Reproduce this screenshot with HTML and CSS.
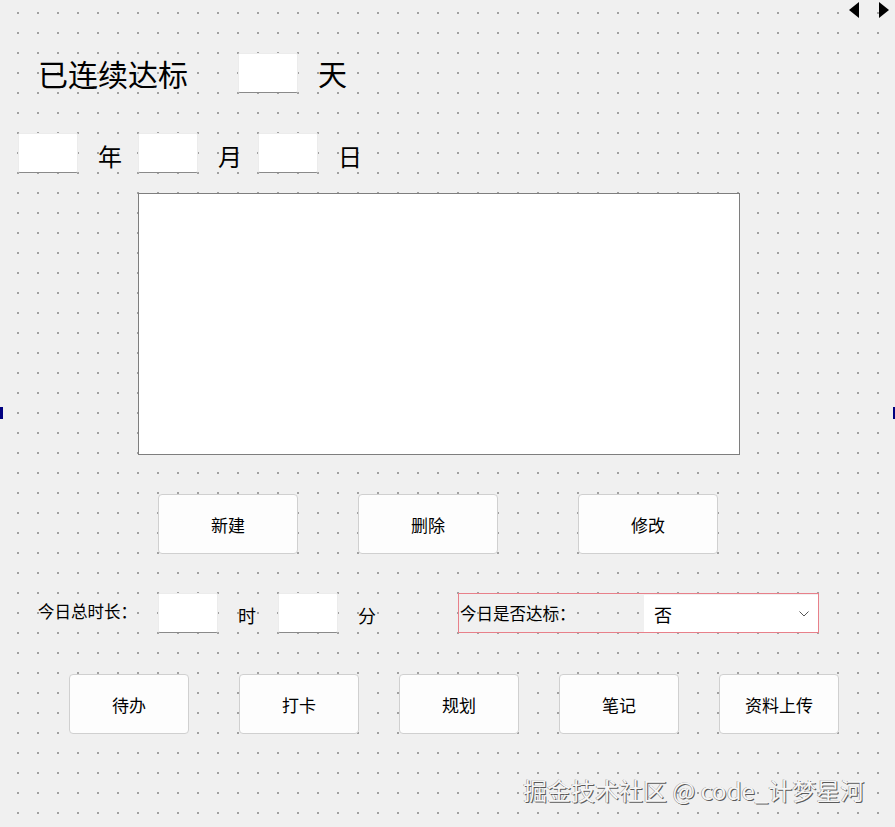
FILE: index.html
```html
<!DOCTYPE html>
<html>
<head>
  <title>打卡</title>
  <link rel="stylesheet" href="styles.css">
</head>
<body>
  <div class="form">
    <div class="nav-arrows">
      <svg width="10" height="16" viewBox="0 0 10 16"><polygon points="10,0 0,8 10,16" fill="#000"/></svg>
      <svg width="10" height="16" viewBox="0 0 10 16"><polygon points="0,0 10,8 0,16" fill="#000"/></svg>
    </div>

    <div class="row streak">
      <span class="streak-label">已连续达标</span>
      <input class="field" type="text">
      <span class="streak-unit">天</span>
    </div>

    <div class="row date">
      <input class="field" type="text">
      <span class="date-unit">年</span>
      <input class="field" type="text">
      <span class="date-unit">月</span>
      <input class="field" type="text">
      <span class="date-unit">日</span>
    </div>

    <textarea class="notes"></textarea>

    <div class="row actions">
      <button class="btn btn-wide">新建</button>
      <button class="btn btn-wide gap-60">删除</button>
      <button class="btn btn-wide gap-80">修改</button>
    </div>

    <div class="row today">
      <span class="today-label">今日总时长：</span>
      <input class="field" type="text">
      <span class="time-unit">时</span>
      <input class="field" type="text">
      <span class="time-unit">分</span>
      <div class="reached">
        <span class="reached-label">今日是否达标：</span>
        <div class="combo">
          <span>否</span>
          <svg width="10" height="6" viewBox="0 0 10 6"><polyline points="0.5,0.5 5,5 9.5,0.5" fill="none" stroke="#555" stroke-width="1"/></svg>
        </div>
      </div>
    </div>

    <div class="row nav">
      <button class="btn">待办</button>
      <button class="btn gap-50">打卡</button>
      <button class="btn gap-40">规划</button>
      <button class="btn gap-40">笔记</button>
      <button class="btn gap-40">资料上传</button>
    </div>

    <div class="watermark">掘金技术社区 @ code_计梦星河</div>

    <span class="handle handle-left"></span>
    <span class="handle handle-right"></span>
  </div>
</body>
</html>
```

FILE: styles.css
```css
body {
  margin: 0;
  background: #f0f0f0;
  font-family: "Noto Sans CJK SC", "Noto Sans", sans-serif;
  color: #000;
}

.form {
  position: relative;
  width: 895px;
  height: 827px;
  padding-top: 53px;
  box-sizing: border-box;
  overflow: hidden;
  background-color: #f0f0f0;
  background-image: radial-gradient(circle, #a2a2a2 0.9px, transparent 1.3px);
  background-size: 20px 20px;
  background-position: 8px 3px;
}

.row {
  display: flex;
  align-items: center;
}

.field {
  width: 60px;
  height: 40px;
  box-sizing: border-box;
  margin: 0;
  padding: 0 4px;
  background: #fff;
  border: 1px solid #ececec;
  border-bottom: 1px solid #8a8a8a;
  border-radius: 2px;
  font: inherit;
  outline: none;
}

/* streak */
.streak {
  height: 40px;
}

.streak-label {
  margin-left: 38px;
  width: 200px;
  font-size: 30px;
  line-height: 40px;
}

.streak-unit {
  margin-left: 20px;
  font-size: 29px;
  line-height: 40px;
}

/* date */
.date {
  margin-top: 40px;
  height: 40px;
  padding-left: 18px;
}

.date-unit {
  width: 40px;
  padding: 6px 0 0 20px;
  font-size: 24px;
  line-height: 34px;
}

.notes {
  display: block;
  margin: 20px 0 0 138px;
  width: 602px;
  height: 262px;
  box-sizing: border-box;
  border: 1px solid #7e7e7e;
  background: #fff;
  resize: none;
  outline: none;
}

/* buttons */
.btn {
  width: 120px;
  height: 60px;
  box-sizing: border-box;
  margin: 0;
  padding: 0;
  background: #fdfdfd;
  border: 1px solid #d0d0d0;
  border-radius: 4px;
  font-family: inherit;
  font-size: 17px;
  color: #000;
}

.btn-wide {
  width: 140px;
}

.actions {
  margin-top: 39px;
  padding-left: 158px;
}

.gap-40 { margin-left: 40px; }
.gap-50 { margin-left: 50px; }
.gap-60 { margin-left: 60px; }
.gap-80 { margin-left: 80px; }

/* today */
.today {
  margin-top: 39px;
  height: 40px;
}

.today-label {
  margin-left: 38px;
  width: 120px;
  font-size: 16.5px;
  margin-top: -4px;
}

.time-unit {
  width: 40px;
  padding-left: 20px;
  font-size: 18px;
  margin-top: 4px;
}

.reached {
  margin-left: 60px;
  width: 361px;
  height: 40px;
  box-sizing: border-box;
  border: 1px solid #e8808a;
  display: flex;
  align-items: stretch;
}

.reached-label {
  width: 184px;
  padding-left: 1px;
  font-size: 16.5px;
  line-height: 38px;
}

.combo {
  flex: 1;
  margin-top: 1px;
  background: #fff;
  display: flex;
  align-items: center;
  justify-content: space-between;
  padding: 0 9px 0 10px;
  font-size: 18px;
}

.nav {
  margin-top: 41px;
  padding-left: 69px;
}

.nav-arrows {
  position: absolute;
  top: 2px;
  left: 849px;
  display: flex;
  gap: 20px;
}

.watermark {
  position: absolute;
  left: 523px;
  top: 772px;
  font-size: 24px;
  color: #f6f6f6;
  text-shadow: 1px 1px 0 #5a5a5a, -0.5px -0.5px 0 #8a8a8a;
  white-space: nowrap;
}

.handle {
  position: absolute;
  top: 407px;
  width: 3px;
  height: 12px;
  background: #000080;
}

.handle-left { left: 0; }
.handle-right { right: 0; width: 2px; }
```
